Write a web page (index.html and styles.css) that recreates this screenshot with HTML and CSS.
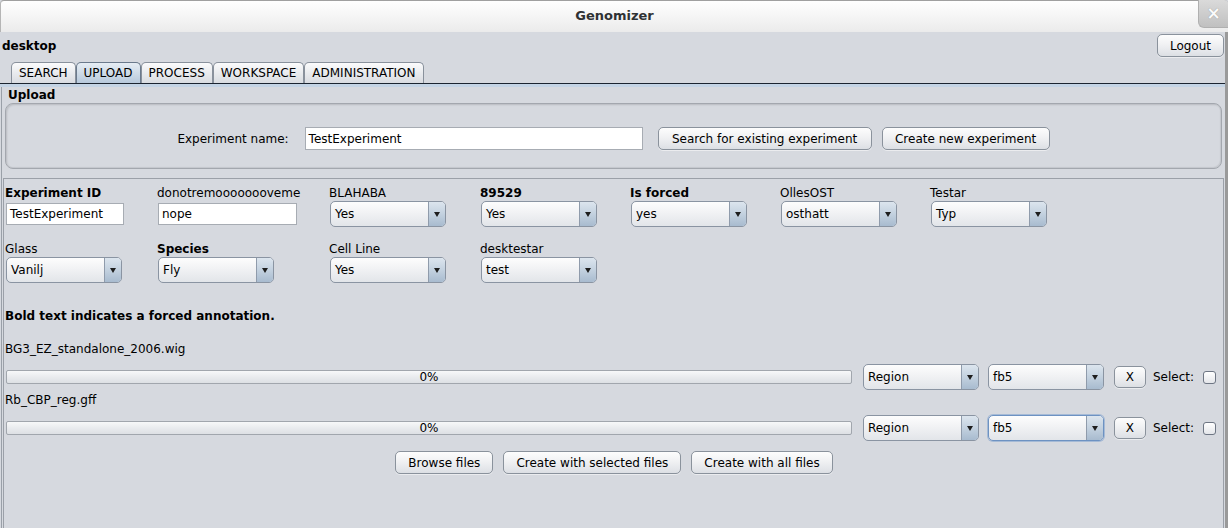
FILE: index.html
```html
<!DOCTYPE html>
<html>
<head>
<meta charset="utf-8">
<title>Genomizer</title>
<link rel="stylesheet" href="styles.css">
</head>
<body>
<div class="window">
  <div class="titlebar">
    <span></span>
    <span class="title">Genomizer</span>
    <span class="close-cell"><span class="close">×</span></span>
  </div>
  <div class="frame">
    <div class="header">
      <span class="user">desktop</span>
      <button class="btn">Logout</button>
    </div>
    <div class="tabs">
      <div class="tab">SEARCH</div>
      <div class="tab active">UPLOAD</div>
      <div class="tab">PROCESS</div>
      <div class="tab">WORKSPACE</div>
      <div class="tab">ADMINISTRATION</div>
    </div>
    <div class="tabline"></div>
    <div class="tabcontent">
      <div class="section-title">Upload</div>
      <div class="upload-panel">
        <span class="name-label">Experiment name:</span>
        <div class="field name-field">TestExperiment</div>
        <button class="btn search-btn">Search for existing experiment</button>
        <button class="btn create-btn">Create new experiment</button>
      </div>
      <div class="annot-panel">
        <div class="grid">
          <div class="cell"><div class="lbl b">Experiment ID</div><div class="field f1">TestExperiment</div></div>
          <div class="cell"><div class="lbl">donotremoooooooveme</div><div class="field f2">nope</div></div>
          <div class="cell"><div class="lbl">BLAHABA</div><div class="combo"><span class="ct">Yes</span><span class="ca"></span></div></div>
          <div class="cell"><div class="lbl b">89529</div><div class="combo"><span class="ct">Yes</span><span class="ca"></span></div></div>
          <div class="cell"><div class="lbl b">Is forced</div><div class="combo"><span class="ct">yes</span><span class="ca"></span></div></div>
          <div class="cell"><div class="lbl">OllesOST</div><div class="combo"><span class="ct">osthatt</span><span class="ca"></span></div></div>
          <div class="cell"><div class="lbl">Testar</div><div class="combo"><span class="ct">Typ</span><span class="ca"></span></div></div>
          <div class="cell"><div class="lbl">Glass</div><div class="combo"><span class="ct">Vanilj</span><span class="ca"></span></div></div>
          <div class="cell"><div class="lbl b">Species</div><div class="combo"><span class="ct">Fly</span><span class="ca"></span></div></div>
          <div class="cell"><div class="lbl">Cell Line</div><div class="combo"><span class="ct">Yes</span><span class="ca"></span></div></div>
          <div class="cell"><div class="lbl">desktestar</div><div class="combo"><span class="ct">test</span><span class="ca"></span></div></div>
        </div>
        <div class="note">Bold text indicates a forced annotation.</div>
        <div class="files">
          <div class="file">
            <div class="fname">BG3_EZ_standalone_2006.wig</div>
            <div class="frow">
              <div class="progress">0%</div>
              <div class="combo c-region"><span class="ct">Region</span><span class="ca"></span></div>
              <div class="combo c-genome"><span class="ct">fb5</span><span class="ca"></span></div>
              <button class="btn x-btn">X</button>
              <span class="sel">Select:</span>
              <span class="check"></span>
            </div>
          </div>
          <div class="file">
            <div class="fname">Rb_CBP_reg.gff</div>
            <div class="frow">
              <div class="progress">0%</div>
              <div class="combo c-region"><span class="ct">Region</span><span class="ca"></span></div>
              <div class="combo c-genome focused"><span class="ct">fb5</span><span class="ca"></span></div>
              <button class="btn x-btn">X</button>
              <span class="sel">Select:</span>
              <span class="check"></span>
            </div>
          </div>
        </div>
        <div class="actions">
          <button class="btn">Browse files</button>
          <button class="btn">Create with selected files</button>
          <button class="btn">Create with all files</button>
        </div>
      </div>
    </div>
  </div>
</div>
</body>
</html>
```
FILE: styles.css
```css
* { box-sizing: border-box; }
html, body { margin: 0; padding: 0; }
body {
  width: 1228px;
  height: 528px;
  overflow: hidden;
  font-family: "DejaVu Sans", sans-serif;
  font-size: 12px;
  color: #000;
  background: #d6d9df;
}
.window { display: flex; flex-direction: column; height: 528px; }

.titlebar {
  flex: none;
  height: 32px;
  display: grid;
  grid-template-columns: 1fr auto 1fr;
  align-items: start;
  background: linear-gradient(#ffffff, #f3f3f3 60%, #ebebeb);
  border-top: 1px solid #a0a0a0;
  border-left: 1px solid #b5b5b5;
  border-radius: 4px 4px 0 0;
}
.title {
  font-weight: bold;
  font-size: 13px;
  line-height: 30px;
  color: #2f3234;
}
.close-cell { display: flex; justify-content: flex-end; }
.close {
  width: 30px;
  height: 28px;
  margin-top: -1px;
  background: linear-gradient(#dadada, #c0c0c0);
  border-left: 1px solid #b0b0b0;
  border-bottom: 1px solid #b0b0b0;
  border-radius: 0 4px 0 6px;
  color: #fbfbfb;
  font-weight: bold;
  font-size: 17px;
  line-height: 26px;
  text-align: center;
  text-shadow: 0 0 1px #888;
}

.frame {
  flex: 1;
  min-height: 0;
  display: flex;
  flex-direction: column;
  border-right: 3px solid #9a9a9a;
}
.header {
  flex: none;
  height: 30px;
  display: flex;
  justify-content: space-between;
  align-items: center;
  padding: 2px 1px 5px 2px;
}
.user { font-weight: bold; }

.btn {
  height: 23px;
  padding: 0 12px;
  border: 1px solid #8a929c;
  border-radius: 5px;
  background: linear-gradient(#fdfdfd, #f0f1f3 45%, #e4e6ea 80%, #dcdfe4);
  font-family: inherit;
  font-size: 12px;
  color: #000;
  display: inline-flex;
  align-items: center;
  justify-content: center;
  white-space: nowrap;
  box-shadow: 0 1px 0 rgba(255,255,255,0.5);
}

.tabs { flex: none; display: flex; padding-left: 11px; height: 21px; }
.tab {
  height: 21px;
  padding: 0 7px;
  border: 1px solid #89919c;
  border-bottom: none;
  border-radius: 5px 5px 0 0;
  background: linear-gradient(#fbfbfc, #e9ebee 50%, #d9dce1);
  display: flex;
  align-items: center;
}
.tab.active {
  background: linear-gradient(#e6edf4, #cfdbe7 50%, #b7c9dc);
  border-color: #6b7a8c;
}
.tabline {
  flex: none;
  height: 4px;
  border-top: 1px solid #1b2430;
  background: #c4d4e5;
}

.tabcontent {
  flex: 1;
  min-height: 0;
  margin-left: 1px;
  border-left: 1px solid #9aa0a8;
  display: flex;
  flex-direction: column;
}
.section-title {
  flex: none;
  font-weight: bold;
  line-height: 15px;
  padding: 1px 0 0 6px;
  height: 16px;
}
.upload-panel {
  flex: none;
  height: 66px;
  margin: 0 3px;
  padding-top: 5px;
  border: 1px solid #a3a7ae;
  border-radius: 8px;
  box-shadow: inset 1px 1px 2px rgba(0,0,0,0.14), inset -1px -1px 1px rgba(0,0,0,0.08);
  display: flex;
  justify-content: center;
  align-items: center;
}
.field {
  height: 22px;
  background: #fff;
  border: 1px solid #a7acb3;
  padding: 0 3px;
  display: flex;
  align-items: center;
  white-space: nowrap;
}
.name-field { width: 338px; height: 23px; margin-left: 16px; }
.search-btn { width: 214px; margin-left: 15px; }
.create-btn { width: 168px; margin-left: 10px; }

.annot-panel {
  flex: 1;
  min-height: 0;
  margin: 9px 1px 0 1px;
  border: 1px solid #9ba0a8;
  border-bottom: none;
  padding: 7px 0 0 1px;
  display: flex;
  flex-direction: column;
}
.grid {
  display: grid;
  grid-template-columns: 152px 172px 151px 150px 150px 150px 150px;
  row-gap: 15px;
}
.cell { display: flex; flex-direction: column; align-items: flex-start; }
.lbl { line-height: 15px; white-space: nowrap; }
.lbl.b { font-weight: bold; }
.cell .field { margin: 2px 0 2px 1px; }
.f1 { width: 118px; }
.f2 { width: 139px; }
.cell .combo { margin-left: 1px; }

.combo {
  width: 116px;
  height: 26px;
  border: 1px solid #8a94a2;
  border-radius: 5px;
  background: linear-gradient(#fdfdfd, #f1f2f4 45%, #e2e5e9);
  display: flex;
  align-items: center;
  overflow: hidden;
  flex: none;
}
.ct { flex: 1; padding-left: 4px; white-space: nowrap; }
.ca {
  width: 17px;
  align-self: stretch;
  border-left: 1px solid #8f9bab;
  background: linear-gradient(#dce5ee, #c3d1df 50%, #a8bbcf);
  display: flex;
  align-items: center;
  justify-content: center;
}
.ca::after {
  content: "";
  width: 0;
  height: 0;
  border-left: 3px solid transparent;
  border-right: 3px solid transparent;
  border-top: 5px solid #1e1e1e;
  margin-top: 1px;
}
.combo.focused {
  border-color: #6d92c2;
  box-shadow: 0 0 0 1px rgba(125,160,205,0.55);
}

.note {
  margin-top: 26px;
  font-weight: bold;
  line-height: 15px;
}
.files { margin-top: 18px; display: flex; flex-direction: column; gap: 3px; }
.fname { line-height: 15px; }
.frow {
  margin-top: 7px;
  height: 26px;
  display: flex;
  align-items: center;
  padding-right: 7px;
}
.progress {
  flex: 1;
  height: 14px;
  margin-left: 1px;
  border: 1px solid #a1a6ad;
  border-radius: 2px;
  background: linear-gradient(#f7f8f9, #e9ebee 50%, #dde0e4);
  text-align: center;
  line-height: 12px;
  font-size: 12px;
}
.c-region { margin-left: 11px; }
.c-genome { margin-left: 9px; }
.x-btn { width: 32px; height: 22px; padding: 0; margin-left: 10px; }
.sel { margin-left: 7px; }
.check {
  width: 13px;
  height: 13px;
  margin-left: 9px;
  border: 1px solid #6e7684;
  border-radius: 3px;
  background: linear-gradient(#ffffff, #e4e6ea);
  flex: none;
}
.actions {
  margin-top: 10px;
  display: flex;
  justify-content: center;
  gap: 10px;
}
```
